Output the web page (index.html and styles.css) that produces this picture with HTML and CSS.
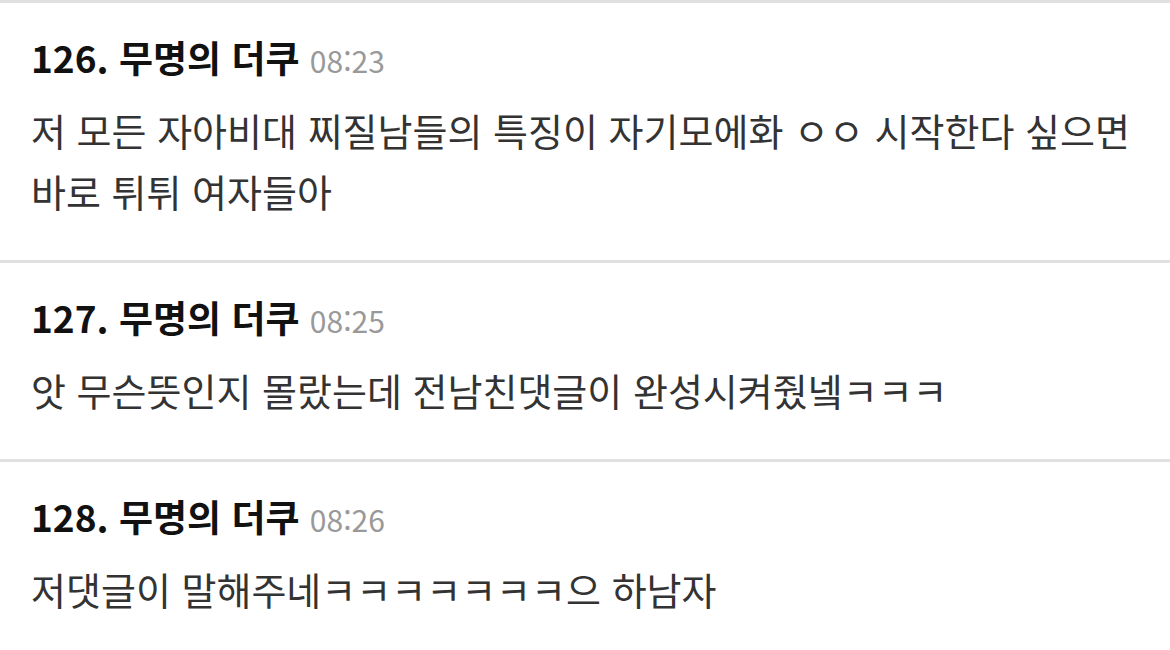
FILE: index.html
```html
<!DOCTYPE html>
<html lang="ko">
<head>
  <meta charset="UTF-8">
  <meta name="viewport" content="width=device-width, initial-scale=1.0">
  <title>댓글</title>
  <link rel="stylesheet" href="styles.css">
</head>
<body>

  <div class="comment-list">
    <!-- 126 -->
    <div class="comment">
      <div class="comment-head">
        <span class="comment-name">126. 무명의 더쿠</span>
        <span class="comment-time">08:23</span>
      </div>
      <div class="comment-body">저 모든 자아비대 찌질남들의 특징이 자기모에화 ㅇㅇ 시작한다 싶으면 바로 튀튀 여자들아</div>
    </div>

    <!-- 127 -->
    <div class="comment">
      <div class="comment-head">
        <span class="comment-name">127. 무명의 더쿠</span>
        <span class="comment-time">08:25</span>
      </div>
      <div class="comment-body">앗 무슨뜻인지 몰랐는데 전남친댓글이 완성시켜줬넼ㅋㅋㅋ</div>
    </div>

    <!-- 128 -->
    <div class="comment">
      <div class="comment-head">
        <span class="comment-name">128. 무명의 더쿠</span>
        <span class="comment-time">08:26</span>
      </div>
      <div class="comment-body">저댓글이 말해주네ㅋㅋㅋㅋㅋㅋㅋ으 하남자</div>
    </div>
  </div>

</body>
</html>
```

FILE: styles.css
```css
* {
  margin: 0;
  padding: 0;
  box-sizing: border-box;
}

body {
  font-family: "Noto Sans CJK KR", "Noto Sans", sans-serif;
  background-color: #fff;
  color: #333;
  width: 1170px;
  overflow: hidden;
}

.comment {
  border-top: 3px solid #e0e0e0;
  padding: 30px 30px 39px 31px;
}

.comment-head {
  font-size: 37px;
  line-height: 48px;
  white-space: nowrap;
}

.comment-name {
  font-weight: 700;
  color: #111;
}

.comment-time {
  font-size: 30px;
  color: #999;
}

.comment-body {
  margin-top: 15px;
  font-size: 38px;
  line-height: 61px;
  color: #333;
  word-break: keep-all;
}
```
